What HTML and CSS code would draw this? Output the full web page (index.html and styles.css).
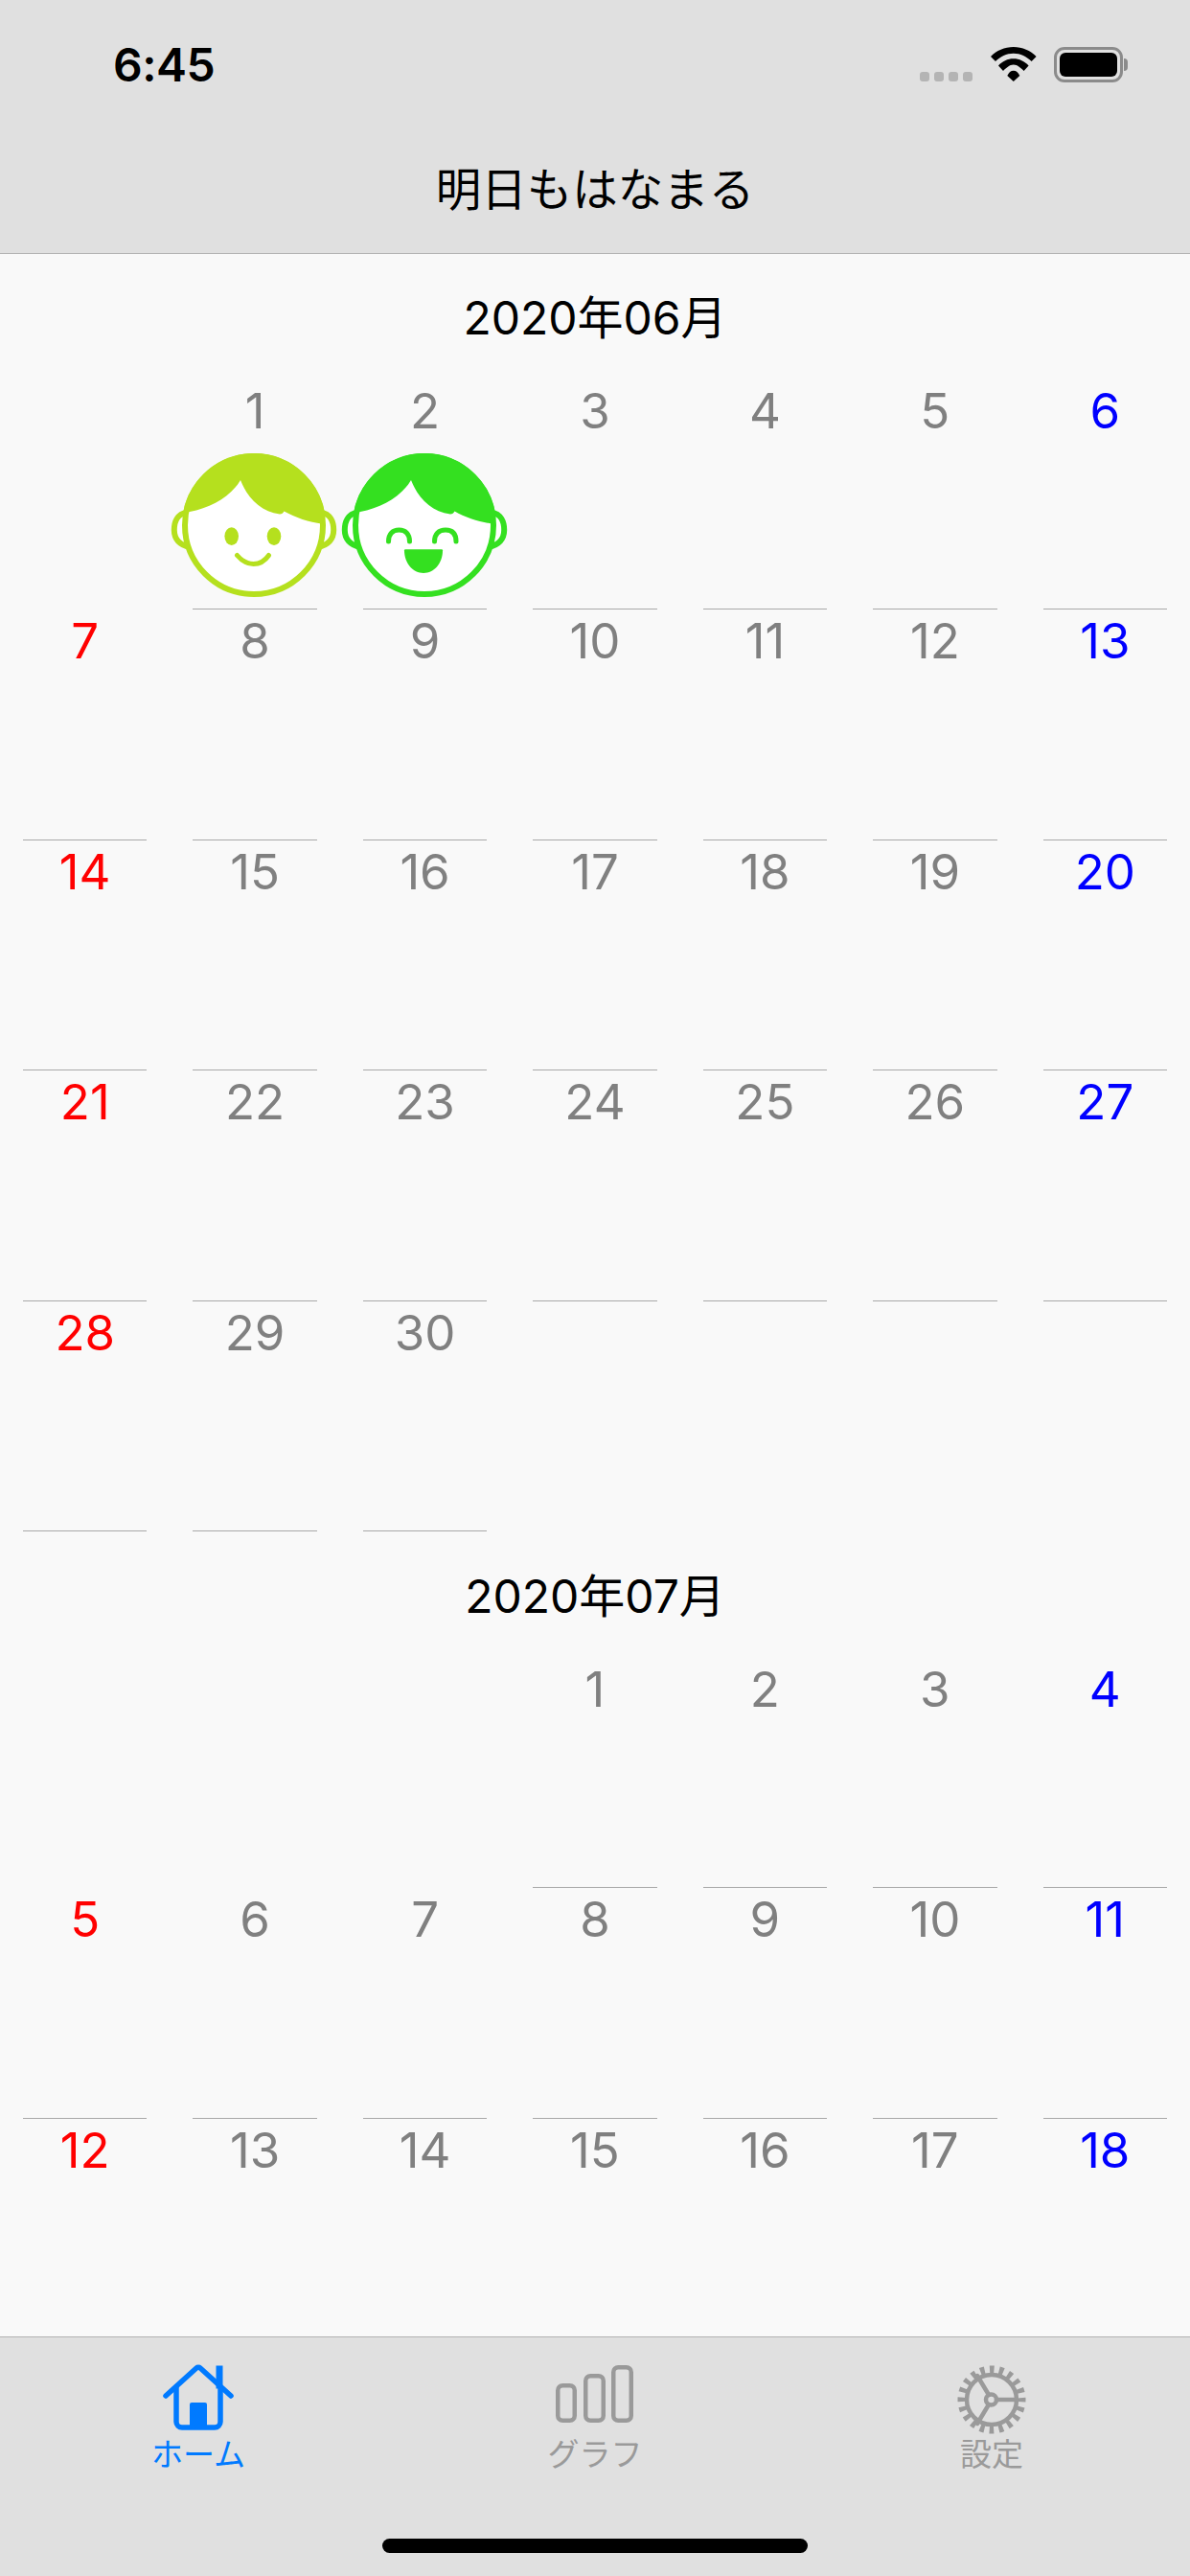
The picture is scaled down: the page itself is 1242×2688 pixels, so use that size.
FILE: index.html
```html
<!DOCTYPE html>
<html lang="ja">
<head>
<meta charset="utf-8">
<title>明日もはなまる</title>
<link rel="stylesheet" href="styles.css">
</head>
<body>
<div class="app">
  <header class="topbar">
    <div class="status">
      <span class="time">6:45</span>
      <div class="status-icons">
        <div class="signal"><i></i><i></i><i></i><i></i></div>
        <svg class="wifi" width="48" height="36" viewBox="0 0 48 36"><path d="M23.800 0C14.500 0 6 3.700 0 10l5 5C10 10 16.500 6.700 23.800 6.700S37.600 10 42.600 15l5-5C41.600 3.700 33 0 23.800 0Z"/><path d="M23.800 12.300C17.500 12.300 12.300 15 8 19.500l5 5.500C16 22 19.500 18.500 23.800 18.500S31.600 22 34.600 25l5-5.500C35.300 15 30 12.300 23.800 12.300Z"/><path d="M17.300 30C19 26.500 21 24.700 23.800 24.700S28.600 26.500 30.300 30L23.800 36Z"/></svg>
        <div class="battery"><div class="battery-body"><div class="battery-fill"></div></div><div class="battery-cap"></div></div>
      </div>
    </div>
    <div class="nav-title">明日もはなまる</div>
  </header>

  <main class="content">
    <section class="month">
      <h2 class="month-title">2020年06月</h2>
      <div class="grid">
        <div class="cell blank"></div>
        <div class="cell"><span class="num">1</span>
          <svg class="face" width="180" height="152" viewBox="0 0 180 152"><g class="lime">
            <path class="ear" d="M20 63C10 64 6.800 73 6.800 81C6.800 90 12 97 24 99"/><path class="ear" d="M160 63C170 64 173.200 73 173.200 81C173.200 90 168 97 156 99"/>
            <circle class="head" cx="90" cy="76" r="72"/>
            <path class="hair" d="M16.200 62.600A75 75 0 0 1 164.300 66L161 74.500C148 73 133 68 121.500 61.500C120.500 63.500 119 64.500 117 64.500C97 62 83 47 76 29C66 46 45 58 23 62Z"/>
            <ellipse class="fill" cx="66.700" cy="87.600" rx="7.300" ry="9.300"/><ellipse class="fill" cx="111" cy="87.600" rx="7.300" ry="9.300"/>
            <path class="line" d="M72.500 107.500C78 114 84 116.500 89.500 116.500S101 114 105.500 107.500"/></g></svg>
        </div>
        <div class="cell"><span class="num">2</span>
          <svg class="face" width="180" height="152" viewBox="0 0 180 152"><g class="green">
            <path class="ear" d="M20 63C10 64 6.800 73 6.800 81C6.800 90 12 97 24 99"/><path class="ear" d="M160 63C170 64 173.200 73 173.200 81C173.200 90 168 97 156 99"/>
            <circle class="head" cx="90" cy="76" r="72"/>
            <path class="hair" d="M16.200 62.600A75 75 0 0 1 164.300 66L161 74.500C148 73 133 68 121.500 61.500C120.500 63.500 119 64.500 117 64.500C97 62 83 47 76 29C66 46 45 58 23 62Z"/>
            <path class="line" d="M52.500 93C52.500 85 57 81 63.500 81S74.500 85 74.500 93"/><path class="line" d="M100.500 93C100.500 85 105 81 112 81S123 85 123 93"/>
            <path class="fill" d="M70 101.300H108Q109 101.300 109 102.300C109 116 100 126 89 126S69 116 69 102.300Q69 101.300 70 101.300Z"/></g></svg>
        </div>
        <div class="cell"><span class="num">3</span></div>
        <div class="cell"><span class="num">4</span></div>
        <div class="cell"><span class="num">5</span></div>
        <div class="cell sat"><span class="num">6</span></div>
        <div class="cell sun"><span class="num">7</span></div>
        <div class="cell"><span class="num">8</span></div>
        <div class="cell"><span class="num">9</span></div>
        <div class="cell"><span class="num">10</span></div>
        <div class="cell"><span class="num">11</span></div>
        <div class="cell"><span class="num">12</span></div>
        <div class="cell sat"><span class="num">13</span></div>
        <div class="cell sun"><span class="num">14</span></div>
        <div class="cell"><span class="num">15</span></div>
        <div class="cell"><span class="num">16</span></div>
        <div class="cell"><span class="num">17</span></div>
        <div class="cell"><span class="num">18</span></div>
        <div class="cell"><span class="num">19</span></div>
        <div class="cell sat"><span class="num">20</span></div>
        <div class="cell sun"><span class="num">21</span></div>
        <div class="cell"><span class="num">22</span></div>
        <div class="cell"><span class="num">23</span></div>
        <div class="cell"><span class="num">24</span></div>
        <div class="cell"><span class="num">25</span></div>
        <div class="cell"><span class="num">26</span></div>
        <div class="cell sat"><span class="num">27</span></div>
        <div class="cell sun"><span class="num">28</span></div>
        <div class="cell"><span class="num">29</span></div>
        <div class="cell"><span class="num">30</span></div>
      </div>
    </section>
    <section class="month">
      <h2 class="month-title">2020年07月</h2>
      <div class="grid">
        <div class="cell blank"></div>
        <div class="cell blank"></div>
        <div class="cell blank"></div>
        <div class="cell"><span class="num">1</span></div>
        <div class="cell"><span class="num">2</span></div>
        <div class="cell"><span class="num">3</span></div>
        <div class="cell sat"><span class="num">4</span></div>
        <div class="cell sun"><span class="num">5</span></div>
        <div class="cell"><span class="num">6</span></div>
        <div class="cell"><span class="num">7</span></div>
        <div class="cell"><span class="num">8</span></div>
        <div class="cell"><span class="num">9</span></div>
        <div class="cell"><span class="num">10</span></div>
        <div class="cell sat"><span class="num">11</span></div>
        <div class="cell sun"><span class="num">12</span></div>
        <div class="cell"><span class="num">13</span></div>
        <div class="cell"><span class="num">14</span></div>
        <div class="cell"><span class="num">15</span></div>
        <div class="cell"><span class="num">16</span></div>
        <div class="cell"><span class="num">17</span></div>
        <div class="cell sat"><span class="num">18</span></div>
      </div>
    </section>
  </main>

  <nav class="tabbar">
    <div class="tabs">
      <div class="tab active">
        <svg class="tab-icon" width="76" height="70" viewBox="0 0 76 70"><path class="stroke" d="M4 33 36 4a3 3 0 0 1 4 0L72 33"/><path class="stroke home-wall" d="M15 24V60a6 6 0 0 0 6 6H55a6 6 0 0 0 6-6V24"/><path class="stroke chimney" d="M60 22V5"/><path class="solid" d="M29 67V42a2 2 0 0 1 2-2H45a2 2 0 0 1 2 2V67Z"/></svg>
        <span class="tab-label">ホーム</span>
      </div>
      <div class="tab">
        <svg class="tab-icon" width="84" height="70" viewBox="0 0 84 70"><rect class="stroke thin" x="3.250" y="22.250" width="17.500" height="36.500" rx="5"/><rect class="stroke thin" x="32.250" y="12.250" width="18.500" height="46.500" rx="5"/><rect class="stroke thin" x="61.250" y="3.250" width="18.500" height="55.500" rx="5"/></svg>
        <span class="tab-label">グラフ</span>
      </div>
      <div class="tab">
        <svg class="tab-icon gear" width="76" height="70" viewBox="0 0 76 70"><circle class="gear-teeth" cx="38" cy="37" r="31"/><circle class="stroke thin" cx="38" cy="37" r="26"/><circle class="stroke thin" cx="37.500" cy="37" r="5.500"/><path class="stroke thin" d="M43 37H64M35 32 23 12M35 42 23 62"/></svg>
        <span class="tab-label">設定</span>
      </div>
    </div>
    <div class="home-bar"></div>
  </nav>
</div>
</body>
</html>
```
FILE: styles.css
```css
* { box-sizing: border-box; }
html, body { margin: 0; padding: 0; }
body { font-family: "Noto Sans CJK JP", "Inter", sans-serif; background: #f9f9f9; }
.app { width: 1242px; height: 2688px; display: flex; flex-direction: column; overflow: hidden; }

.topbar { height: 265px; flex: none; background: #e0e0e0; border-bottom: 1px solid #b2b2b2; }
.status { height: 132px; display: flex; justify-content: space-between; align-items: flex-start; padding: 43px 65px 0 118px; }
.time { font: 600 48px/50px "Inter", "Liberation Sans", sans-serif; color: #000; letter-spacing: -0.5px; }
.status-icons { display: flex; align-items: flex-start; margin-top: 6px; }
.signal { display: flex; gap: 5px; margin-top: 26px; margin-right: 19px; }
.signal i { display: block; width: 10px; height: 10px; border-radius: 3px; background: #b4b4b4; }
.wifi { fill: #000; margin-right: 18px; }
.battery { display: flex; align-items: center; height: 37px; }
.battery-body { width: 72px; height: 37px; border: 3px solid #8b8b8b; border-radius: 11px; padding: 3px; }
.battery-fill { width: 100%; height: 100%; background: #000; border-radius: 6px; }
.battery-cap { width: 4px; height: 13px; margin-left: 1px; background: #8b8b8b; border-radius: 0 4px 4px 0; }
.nav-title { text-align: center; font-size: 47.500px; line-height: 64px; color: #000; margin-top: 31px; }

.content { flex: 1; min-height: 0; overflow: hidden; background: #f9f9f9; }
.month { padding-bottom: 1px; }
.month-title { margin: 0; height: 130.500px; padding-top: 35px; text-align: center; font-weight: 400; font-size: 48px; line-height: 64px; color: #000; font-family: "Inter", "Noto Sans CJK JP", sans-serif; }
.grid { display: grid; grid-template-columns: repeat(7, 1fr); grid-auto-rows: 240.5px; }
.cell { position: relative; text-align: center; color: #808080; }
.cell::after { content: ""; position: absolute; left: 24px; right: 24px; bottom: 0; height: 1px; background: #a8a8a8; }
.cell.blank::after { display: none; }
.num { display: block; padding-top: 5px; font: 400 51px/56px "Inter", "Liberation Sans", sans-serif; }
.sun { color: #ff0000; }
.sat { color: #0000ff; }

.face { position: absolute; left: 50%; top: 76px; margin-left: -91px; }
.lime { --c: #b5e01e; }
.green { --c: #34e020; }
.head { fill: #fff; stroke: var(--c); stroke-width: 6; }
.ear { fill: #fff; stroke: var(--c); stroke-width: 6; }
.hair, .fill { fill: var(--c); }
.line { fill: none; stroke: var(--c); stroke-width: 5; stroke-linecap: round; }

.tabbar { flex: none; height: 250px; background: #e0e0e0; border-top: 1px solid #b2b2b2; display: flex; flex-direction: column; }
.tabs { display: grid; grid-template-columns: 414px 414px 414px; padding-top: 28px; }
.tab { display: flex; flex-direction: column; align-items: center; color: #9a9a9a; }
.tab-icon { display: block; }
.gear { overflow: visible; }
.tab-label { font-size: 33px; line-height: 38px; margin-top: 3px; }
.active { color: #007aff; }
.stroke { fill: none; stroke: currentColor; stroke-width: 5.500; stroke-linecap: round; stroke-linejoin: round; }
.stroke.thin { stroke-width: 4.500; }
.stroke.chimney { stroke-width: 7; stroke-linecap: square; }
.solid { fill: currentColor; }
.gear-teeth { fill: none; stroke: currentColor; stroke-width: 9; stroke-dasharray: 4.500 5.240; stroke-dashoffset: 2.250; }
.home-bar { width: 444px; height: 15px; border-radius: 8px; background: #000; margin: auto auto 24px; }
```
